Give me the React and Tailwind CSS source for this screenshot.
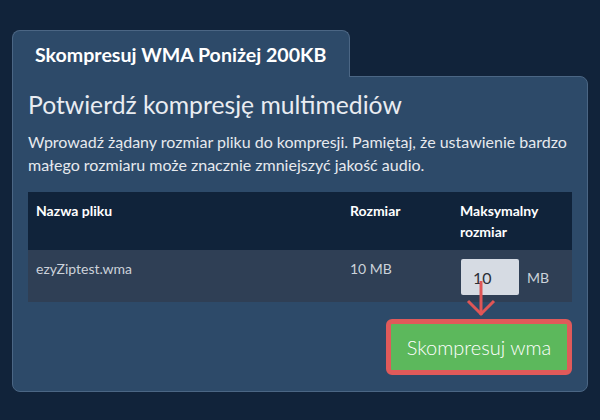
export default function App() {
  return (
    <div
      className="w-[600px] h-[420px] bg-[#11233a] pt-[30px] px-[12px]"
      style={{ fontFamily: 'Lato, "Open Sans", sans-serif' }}
    >
      <div className="relative z-10 -mb-px w-[338px] h-[47px] bg-[#2d4a69] border border-b-0 border-[#4b6684] rounded-t-[8px] pl-[22px] pt-[12px]">
        <div className="text-[19.6px] leading-[24px] font-bold text-white">Skompresuj WMA Poniżej 200KB</div>
      </div>
      <div className="h-[316px] bg-[#2d4a69] border border-[#4b6684] rounded-b-[8px] rounded-tr-[8px] px-[15px] pt-[13px]">
        <h1 className="text-[24.7px] leading-[29px] text-[#e9ecf1]">Potwierdź kompresję multimediów</h1>
        <p className="mt-[11px] text-[16px] leading-[23px] text-[#e6e9ee]">
          Wprowadź żądany rozmiar pliku do kompresji. Pamiętaj, że ustawienie bardzo małego rozmiaru może znacznie zmniejszyć jakość audio.
        </p>
        <div className="mt-[16px]">
          <div className="flex bg-[#10233a] h-[58px] text-[14px] leading-[21px] font-bold text-white">
            <div className="w-[314px] px-[8px] pt-[8px]">Nazwa pliku</div>
            <div className="w-[110px] px-[8px] pt-[8px]">Rozmiar</div>
            <div className="flex-1 px-[8px] pt-[8px]">Maksymalny<br />rozmiar</div>
          </div>
          <div className="flex bg-[#2f3f55] h-[52px] text-[14px] leading-[21px] text-[#ccd2da]">
            <div className="w-[314px] px-[8px] pt-[8px]">ezyZiptest.wma</div>
            <div className="w-[110px] px-[8px] pt-[8px]">10 MB</div>
            <div className="flex-1 pl-[9px] pt-[9px]">
              <div className="relative flex items-center gap-[8px]">
                <div className="w-[58px] h-[36px] bg-[#d6dbe3] rounded-[2px] pl-[12px] flex items-center text-[16px] text-[#2a2f36]">10</div>
                <span>MB</span>
                <svg className="absolute left-[3px] top-[20px] z-20" width="34" height="40" viewBox="0 0 34 40">
                  <path d="M17 2 L17 36" stroke="#e05656" strokeWidth="3" fill="none" />
                  <path d="M4 22 L17 35 L30 22" stroke="#e05656" strokeWidth="3" fill="none" />
                </svg>
              </div>
            </div>
          </div>
        </div>
        <div className="flex justify-end mt-[17px]">
          <button className="w-[186px] h-[56px] bg-[#5cb85c] border-[5px] border-[#e05a5a] rounded-[6px] text-white text-[20px] leading-[24px] font-light">
            Skompresuj wma
          </button>
        </div>
      </div>
    </div>
  );
}
